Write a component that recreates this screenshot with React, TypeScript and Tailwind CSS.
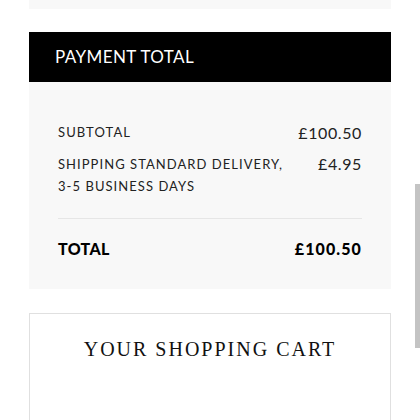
export default function App() {
  const sans = { fontFamily: "Lato, 'Open Sans', sans-serif" };
  return (
    <div className="relative w-[420px] h-[420px] overflow-hidden bg-white" style={sans}>
      <div className="mx-[29px] flex flex-col">
        <div className="h-[9px] bg-[#f8f8f8]" />
        <div className="mt-[23px] h-[50px] bg-black flex items-center px-[26px]">
          <span className="text-white text-[17px] tracking-[0.4px] font-normal">PAYMENT TOTAL</span>
        </div>
        <div className="bg-[#f8f8f8] h-[207px] px-[29px] pt-[40px] flex flex-col text-[#222]">
          <div className="flex justify-between items-center h-[22px]">
            <span className="text-[13px] tracking-[1.1px]">SUBTOTAL</span>
            <span className="text-[16px] tracking-[0.6px]">£100.50</span>
          </div>
          <div className="flex justify-between mt-[9px]">
            <span className="text-[13px] tracking-[1.05px] leading-[22px]">
              SHIPPING STANDARD DELIVERY,
              <br />
              3-5 BUSINESS DAYS
            </span>
            <span className="text-[16px] tracking-[0.6px] leading-[22px]">£4.95</span>
          </div>
          <div className="mt-[21px] h-px bg-[#e6e6e6]" />
          <div className="mt-[19px] flex justify-between items-center h-[22px] text-black font-black">
            <span className="text-[16px] tracking-[0.3px]">TOTAL</span>
            <span className="text-[16px] tracking-[1.1px]">£100.50</span>
          </div>
        </div>
        <div className="mt-[24px] border border-[#e0e0e0] h-[200px] pt-[21px] flex justify-center">
          <span
            className="text-[20px] leading-[28px] tracking-[2px] text-[#111]"
            style={{ fontFamily: "'Liberation Serif', serif" }}
          >
            YOUR SHOPPING CART
          </span>
        </div>
      </div>
      <div className="absolute right-0 top-[184px] w-[5px] h-[164px] bg-[#c4c4c4]" />
    </div>
  );
}
